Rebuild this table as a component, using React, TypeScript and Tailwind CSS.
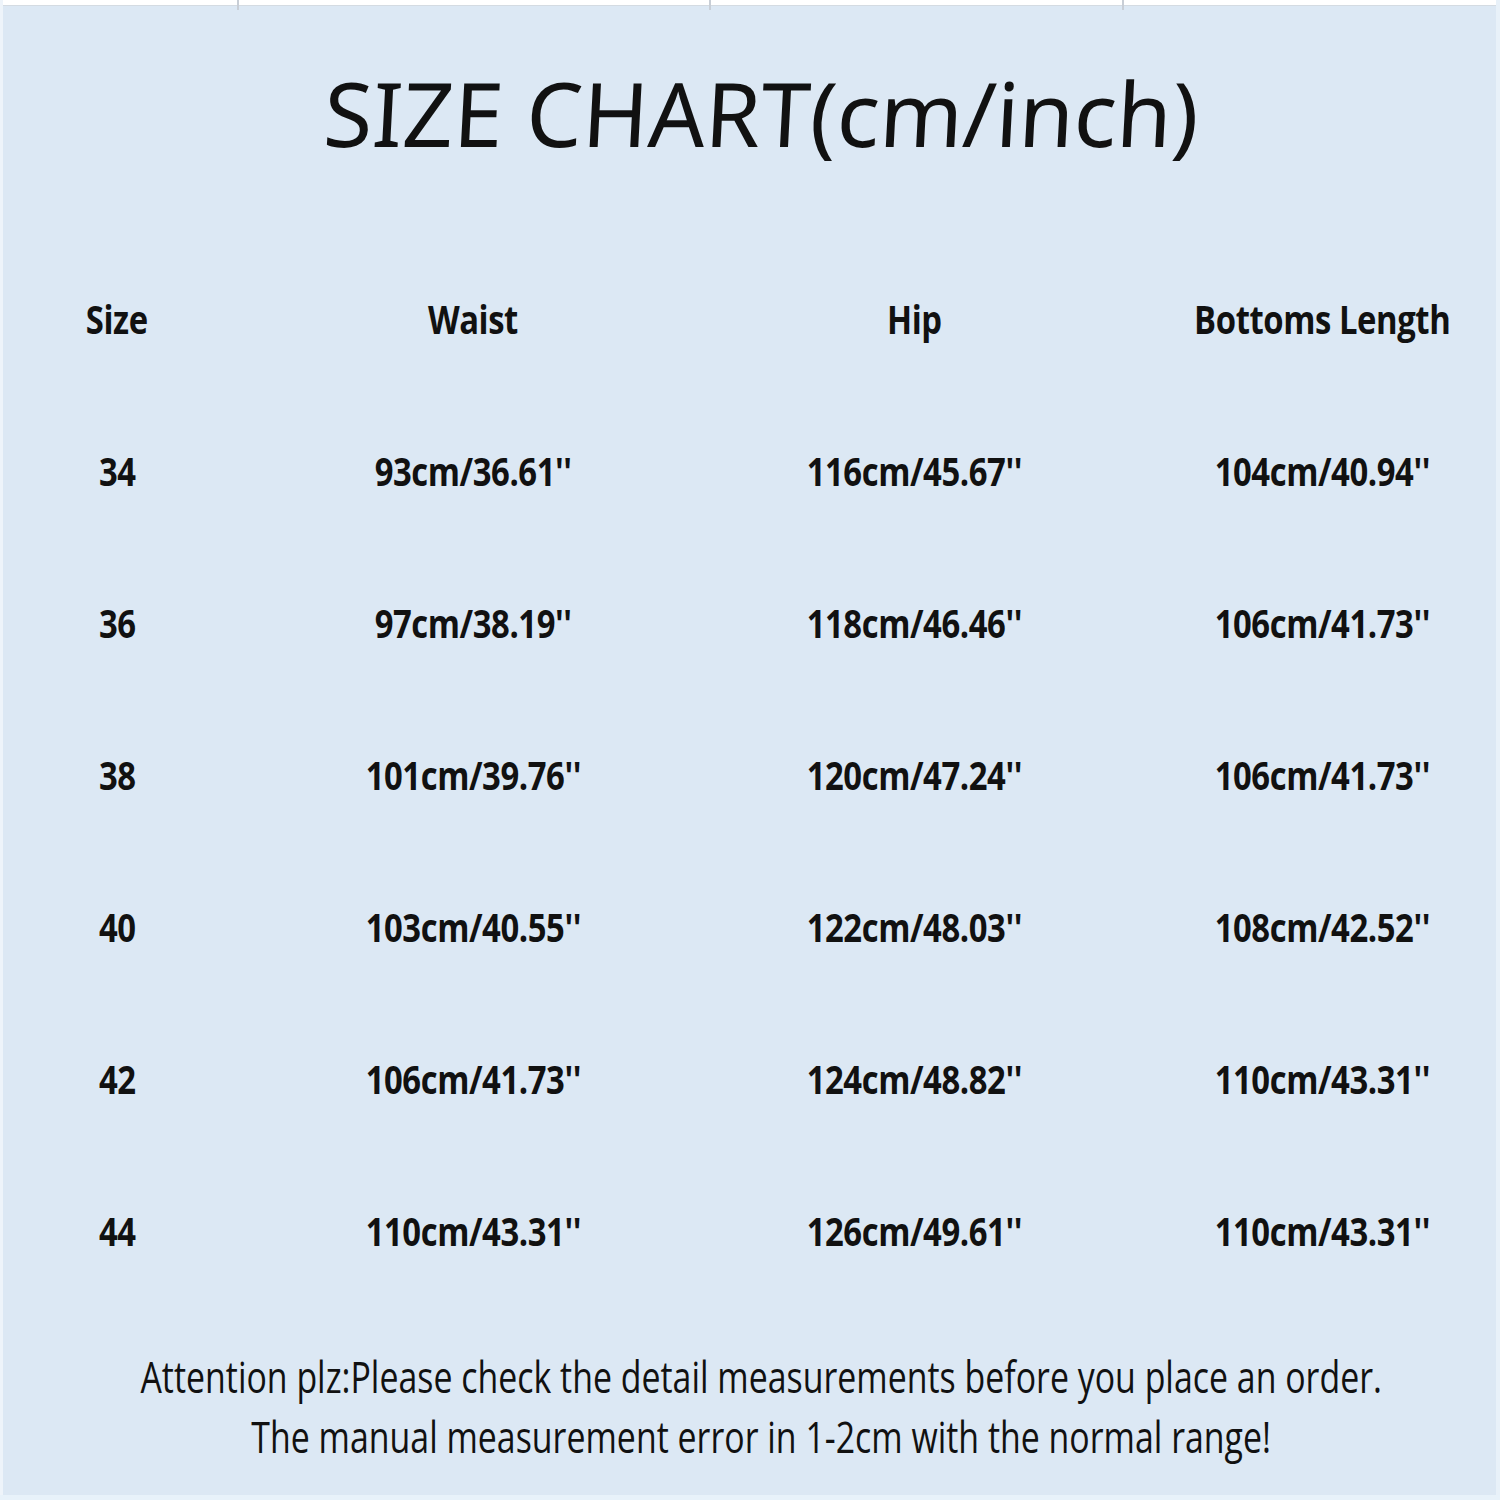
import React from "react";

const rows = [
  ["34", "93cm/36.61''", "116cm/45.67''", "104cm/40.94''"],
  ["36", "97cm/38.19''", "118cm/46.46''", "106cm/41.73''"],
  ["38", "101cm/39.76''", "120cm/47.24''", "106cm/41.73''"],
  ["40", "103cm/40.55''", "122cm/48.03''", "108cm/42.52''"],
  ["42", "106cm/41.73''", "124cm/48.82''", "110cm/43.31''"],
  ["44", "110cm/43.31''", "126cm/49.61''", "110cm/43.31''"],
];

function Cell({ children, last }: { children: React.ReactNode; last?: boolean }) {
  return (
    <div className={`flex h-[152px] items-center justify-center ${last ? "pl-[28px]" : ""}`}>
      <span className="inline-block origin-center scale-x-[0.82] whitespace-nowrap font-['Open_Sans',sans-serif] text-[40px] font-bold leading-none tracking-[-0.5px] text-[#111]">
        {children}
      </span>
    </div>
  );
}

export default function App() {
  return (
    <div className="relative flex h-[1500px] w-[1500px] flex-col overflow-hidden bg-[#dce8f4]">
      <div className="h-[6px] w-full border-b border-[#d4dbe2] bg-white" />
      <div className="absolute left-[237px] top-0 h-[10px] w-[2px] bg-[#c8ced6]" />
      <div className="absolute left-[709px] top-0 h-[10px] w-[2px] bg-[#c8ced6]" />
      <div className="absolute left-[1122px] top-0 h-[10px] w-[2px] bg-[#c8ced6]" />
      <div className="absolute left-0 top-0 h-full w-[3px] bg-[#eef4fa]" />
      <div className="absolute right-0 top-0 h-full w-[4px] bg-[#e8f1f9]" />
      <div className="absolute bottom-0 left-0 h-[5px] w-full bg-[#e8f2fa]" />

      <div className="flex h-[237px] items-start justify-center pl-[22px] pt-[54px]">
        <span className="inline-block -skew-x-3 whitespace-nowrap font-['Noto_Sans',sans-serif] text-[89px] font-normal leading-[1.2] text-[#111]">
          SIZE CHART(cm/inch)
        </span>
      </div>

      <div className="grid grid-cols-[234px_478px_404px_1fr]">
        <Cell>Size</Cell>
        <Cell>Waist</Cell>
        <Cell>Hip</Cell>
        <Cell last>Bottoms Length</Cell>
        {rows.map((r) => (
          <React.Fragment key={r[0] + r[1]}>
            <Cell>{r[0]}</Cell>
            <Cell>{r[1]}</Cell>
            <Cell>{r[2]}</Cell>
            <Cell last>{r[3]}</Cell>
          </React.Fragment>
        ))}
      </div>

      <div className="flex flex-col items-center pl-[22px] pt-[39px]">
        <span className="inline-block origin-center scale-x-[0.77] whitespace-nowrap font-['Open_Sans',sans-serif] text-[44px] font-normal leading-[60px] text-[#111]">
          Attention plz:Please check the detail measurements before you place an order.
        </span>
        <span className="inline-block origin-center scale-x-[0.77] whitespace-nowrap font-['Open_Sans',sans-serif] text-[44px] font-normal leading-[60px] text-[#111]">
          The manual measurement error in 1-2cm with the normal range!
        </span>
      </div>
    </div>
  );
}
